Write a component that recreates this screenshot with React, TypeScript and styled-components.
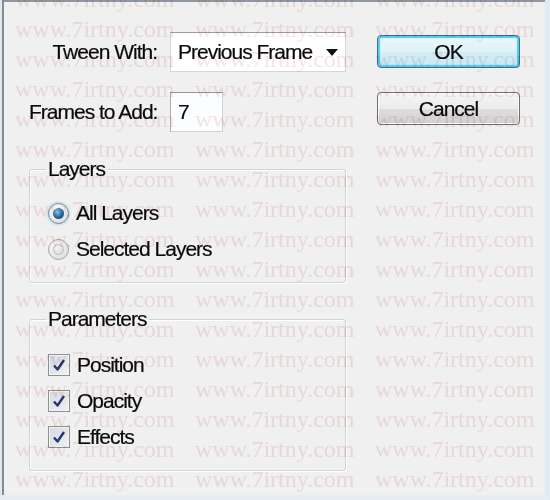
import styled, { createGlobalStyle } from "styled-components"

const GlobalStyle = createGlobalStyle`
  html, body {
    margin:0;
    padding:0;
    background:#f0f0f0;
  }
`

const Window = styled.div`
  position:relative;
  width:550px;
  height:500px;
  box-sizing:border-box;
  overflow:hidden;
  display:flex;
  gap:31px;
  padding-left:27px;
  background:#f0f0f0;
  border-left:2px solid #e2e7ec;
  border-right:5px solid #e1ebf3;
  border-bottom:5px solid #e6edf3;
  box-shadow:inset 2px 0 0 #7f8b97, inset 0 2px 0 #8d98a3;
  font-family:"Liberation Sans", Arial, sans-serif;
  font-size:21px;
  letter-spacing:-1px;
  color:#0a0a0a;
  -webkit-text-stroke:0.2px #0a0a0a;
`

const LeftPane = styled.div`
  width:317px;
  display:flex;
  flex-direction:column;
`

const FieldRow = styled.div<{ $top: number }>`
  display:grid;
  grid-template-columns:128px 1fr;
  column-gap:13px;
  align-items:center;
  margin-top:${(p) => p.$top}px;
`

const Label = styled.label`
  text-align:right;
  white-space:nowrap;
`

const Select = styled.div`
  width:176px;
  height:40px;
  box-sizing:border-box;
  display:flex;
  align-items:center;
  justify-content:space-between;
  padding:0 7px;
  background:#fff;
  border:1px solid #d6d6d6;
  border-top-color:#9c9c9c;
  white-space:nowrap;
`

const Caret = styled.span`
  width:0;
  height:0;
  border-left:6px solid transparent;
  border-right:6px solid transparent;
  border-top:7px solid #111;
`

const TextInput = styled.div`
  width:53px;
  height:40px;
  box-sizing:border-box;
  display:flex;
  align-items:center;
  padding-left:7px;
  background:#fbfdff;
  border:1px solid #cfd3d6;
  border-top-color:#8f959a;
  border-left-color:#a9aeb3;
`

const Group = styled.fieldset<{ $top: number; $pt: number; $pb: number }>`
  margin:${(p) => p.$top}px 0 0 0;
  width:317px;
  box-sizing:border-box;
  padding:${(p) => p.$pt}px 0 ${(p) => p.$pb}px 18px;
  border:1px solid #d2d2d2;
  border-radius:3px;
  box-shadow:inset 1px 1px 0 #fff, 1px 1px 0 #fff;
`

const Legend = styled.legend`
  padding:0 2px;
  margin-left:-2px;
  line-height:24px;
`

const OptionRow = styled.div`
  height:36px;
  display:flex;
  align-items:center;
  gap:7px;
`

const Radio = styled.span<{ $checked?: boolean }>`
  position:relative;
  width:21px;
  height:21px;
  box-sizing:border-box;
  border-radius:50%;
  border:1px solid ${(p) => (p.$checked ? "#6f8aa0" : "#a4a4a4")};
  background:radial-gradient(circle at 40% 35%, #ffffff, #dcdcdc 80%);
  box-shadow:${(p) => (p.$checked ? "0 0 2px 1px #b9dcf0" : "none")};

  &::after{
    content:"";
    position:absolute;
    left:4px;
    top:4px;
    width:11px;
    height:11px;
    border-radius:50%;
    background:${(p) =>
      p.$checked
        ? "radial-gradient(circle at 40% 35%, #8fcdf2, #25679f 55%, #123559)"
        : "radial-gradient(circle at 40% 35%, #f4f4f4, #cfcfcf)"};
    box-shadow:${(p) => (p.$checked ? "none" : "inset 0 0 0 1px #c4c4c4")};
  }
`

const Box = styled.span`
  width:22px;
  height:22px;
  box-sizing:border-box;
  display:flex;
  align-items:center;
  justify-content:center;
  border:1px solid #8e8f8f;
  background:linear-gradient(135deg, #d3d8e1, #f0f1f4);
  box-shadow:inset 0 0 0 1px #f5f5f5;
`

const RightPane = styled.div`
  padding-top:35px;
  display:flex;
  flex-direction:column;
  gap:24px;
`

const Button = styled.button<{ $default?: boolean }>`
  width:143px;
  height:33px;
  padding:0;
  font:inherit;
  letter-spacing:inherit;
  color:#0a0a0a;
  border-radius:4px;
  border:1px solid ${(p) => (p.$default ? "#3a6f94" : "#707070")};
  background:${(p) =>
    p.$default
      ? "linear-gradient(#eaf7fc, #dff2fa 50%, #d3eef9 51%, #c6e8f6)"
      : "linear-gradient(#f4f4f4, #ececec 50%, #dedede 51%, #d0d0d0)"};
  box-shadow:${(p) =>
    p.$default ? "inset 0 0 1px 2px #55c9f0" : "inset 0 0 0 1px #fbfbfb"};
`

const Watermark = styled.div`
  position:absolute;
  top:-16px;
  left:13px;
  display:grid;
  grid-template-columns:repeat(3, 180px);
  pointer-events:none;
  mix-blend-mode:multiply;
  font-family:"Liberation Serif", "Times New Roman", serif;
  font-size:24px;
  line-height:30px;
  letter-spacing:0;
  color:#f7e5e5;
  -webkit-text-stroke:0;
  white-space:nowrap;
`

const Check = () => (
  <svg width="14" height="14" viewBox="0 0 14 14">
    <path d="M2 7.5 L5.5 11.5 L12 2" fill="none" stroke="#27386a" strokeWidth="2.4" strokeLinejoin="round" />
  </svg>
)

const marks = Array.from({ length: 17 * 3 }, (_, i) => i)

const App = () => {
  return (
    <>
      <GlobalStyle />
      <Window>
        <LeftPane>
          <FieldRow $top={32}>
            <Label>Tween With:</Label>
            <Select>
              <span>Previous Frame</span>
              <Caret />
            </Select>
          </FieldRow>
          <FieldRow $top={20}>
            <Label>Frames to Add:</Label>
            <TextInput>7</TextInput>
          </FieldRow>

          <Group $top={25} $pt={14} $pb={15}>
            <Legend>Layers</Legend>
            <OptionRow>
              <Radio $checked />
              All Layers
            </OptionRow>
            <OptionRow>
              <Radio />
              Selected Layers
            </OptionRow>
          </Group>

          <Group $top={24} $pt={16} $pb={15}>
            <Legend>Parameters</Legend>
            <OptionRow>
              <Box><Check /></Box>
              Position
            </OptionRow>
            <OptionRow>
              <Box><Check /></Box>
              Opacity
            </OptionRow>
            <OptionRow>
              <Box><Check /></Box>
              Effects
            </OptionRow>
          </Group>
        </LeftPane>

        <RightPane>
          <Button $default>OK</Button>
          <Button>Cancel</Button>
        </RightPane>

        <Watermark>
          {marks.map((i) => (
            <span key={i}>www.7irtny.com</span>
          ))}
        </Watermark>
      </Window>
    </>
  )
}

export default App
